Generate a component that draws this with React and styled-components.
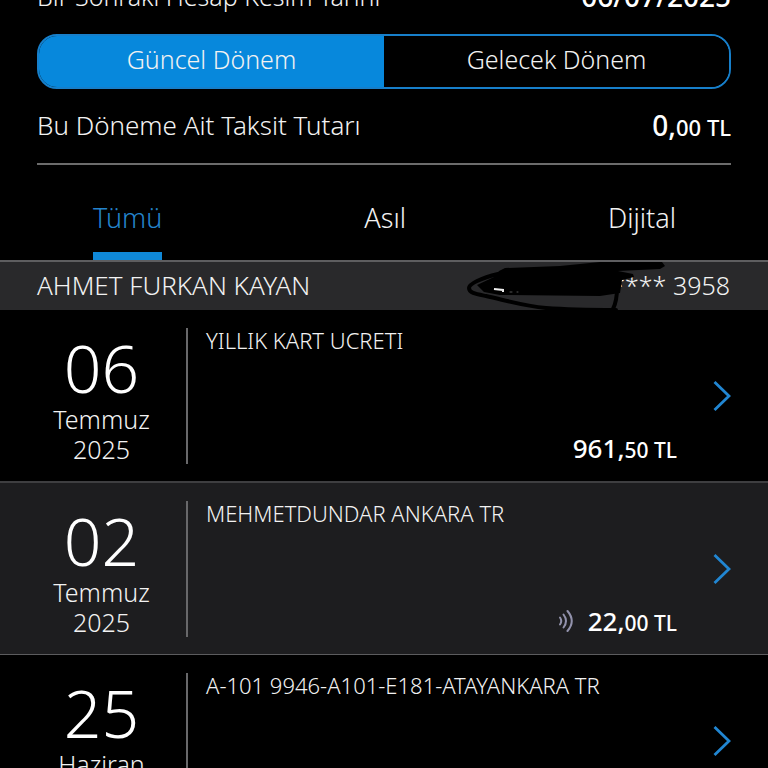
import React, { useState } from 'react';
import styled, { createGlobalStyle } from 'styled-components';

const GlobalStyle = createGlobalStyle`
  * {
    box-sizing: border-box;
  }

  body {
    margin: 0;
    background: #000;
    color: #f2f2f2;
    font-family: 'Noto Sans', 'Open Sans', sans-serif;
    font-weight: 300;
  }

  button {
    font: inherit;
    color: inherit;
    background: none;
    border: 0;
    padding: 0;
    cursor: pointer;
  }
`;

const Screen = styled.main`
  height: 100vh;
  overflow: hidden;
`;

const Summary = styled.section`
  padding: 0 37px;
`;

const SummaryRow = styled.div`
  display: flex;
  justify-content: space-between;
  align-items: flex-end;
  height: ${props => (props.$clipped ? 12 : 30)}px;
  font-size: ${props => (props.$clipped ? 25 : 26)}px;
  line-height: 32px;
`;

const Strong = styled.strong`
  font-size: ${props => (props.$large ? 28 : 26)}px;
  font-weight: 500;
  color: #fff;

  small {
    font-size: ${props => (props.$large ? 22 : 21)}px;
    line-height: 1;
  }
`;

const Segments = styled.div`
  display: flex;
  height: 55px;
  margin: 22px 0;
  border: 2px solid #177fca;
  border-radius: 20px;
  overflow: hidden;
`;

const Segment = styled.button`
  flex: 1;
  font-size: 25px;
  padding-bottom: 6px;
  background: ${props => (props.$active ? '#0788dc' : '#000')};
`;

const Divider = styled.hr`
  height: 2px;
  margin: 22px 0 0;
  border: 0;
  background: #6c6c6c;
`;

const Tabs = styled.div`
  display: flex;
  justify-content: space-between;
  padding: 0 92px 0 93px;
  height: 95px;
`;

const Tab = styled.button`
  display: flex;
  align-items: flex-end;
  font-size: 27px;
  line-height: 32px;
  padding-bottom: 18px;
  color: ${props => (props.$active ? '#2484cc' : '#f2f2f2')};
  border-bottom: 8px solid ${props => (props.$active ? '#0f88d8' : 'transparent')};
`;

const CardBar = styled.header`
  position: relative;
  display: flex;
  justify-content: space-between;
  align-items: center;
  height: 50px;
  padding: 0 38px 2px 37px;
  border-top: 2px solid #5e5e60;
  background: #29292b;
  font-size: 26px;
  line-height: 32px;
`;

const CardNumber = styled.span`
  font-size: 25px;
`;

const Scribble = styled.svg`
  position: absolute;
  right: 98px;
  top: -2px;
`;

const List = styled.ul`
  list-style: none;
  margin: 0;
  padding: 0;
`;

const Item = styled.li`
  background: ${props => (props.$shaded ? '#1d1d1f' : '#000')};

  &:not(:first-child) {
    border-top: ${props => (props.$shaded ? '2px solid #3e3e40' : '1px solid #5c5c5e')};
  }
`;

const ItemButton = styled.button`
  display: flex;
  align-items: center;
  width: 100%;
  height: 171px;
  padding: 18px 37px 17px 17px;
  text-align: left;
`;

const DateBox = styled.div`
  width: 171px;
  height: 136px;
  padding-top: 4px;
  border-right: 2px solid #68686a;
  text-align: center;
  font-size: 25px;
  line-height: 30px;
`;

const Day = styled.div`
  font-size: 66px;
  line-height: 70px;
  margin-bottom: 2px;
  color: #fff;
`;

const Details = styled.div`
  flex: 1;
  display: flex;
  flex-direction: column;
  justify-content: space-between;
  height: 136px;
  padding: 0 36px 2px 18px;
`;

const Title = styled.span`
  font-size: 22px;
  line-height: 24px;
`;

const Price = styled.div`
  display: flex;
  justify-content: flex-end;
  align-items: center;
  gap: 14px;
  line-height: 28px;
`;

const transactions = [
  { day: '06', month: 'Temmuz', year: '2025', title: 'YILLIK KART UCRETI', whole: '961', cents: '50' },
  { day: '02', month: 'Temmuz', year: '2025', title: 'MEHMETDUNDAR ANKARA TR', whole: '22', cents: '00', contactless: true },
  { day: '25', month: 'Haziran', year: '2025', title: 'A-101 9946-A101-E181-ATAYANKARA TR' },
];

const Money = ({ whole, cents, large }) => (
  <Strong $large={large}>
    {whole},<small>{cents} TL</small>
  </Strong>
);

const Chevron = () => (
  <svg width="18" height="30" viewBox="0 0 18 30" fill="none" stroke="#2186d2" strokeWidth="2.8" aria-hidden="true">
    <path d="M1.5 1 16 15 1.5 29" />
  </svg>
);

const Contactless = () => (
  <svg width="16" height="24" viewBox="0 0 16 24" fill="none" stroke="#9292ac" strokeWidth="2" strokeLinecap="round" aria-label="Temassız">
    <path d="M2 8.5Q4.5 12 2 15.5" />
    <path d="M5.5 5.5Q10.5 12 5.5 18.5" />
    <path d="M9.5 2Q18 12 9.5 22" />
  </svg>
);

const App = () => {
  const [period, setPeriod] = useState('Güncel Dönem');
  const [tab, setTab] = useState('Tümü');

  return (
    <>
      <GlobalStyle />
      <Screen>
        <Summary>
          <SummaryRow $clipped>
            <span>Bir Sonraki Hesap Kesim Tarihi</span>
            <Strong $large>06/07/2025</Strong>
          </SummaryRow>
          <Segments>
            {['Güncel Dönem', 'Gelecek Dönem'].map(name => (
              <Segment key={name} $active={name === period} onClick={() => setPeriod(name)}>
                {name}
              </Segment>
            ))}
          </Segments>
          <SummaryRow>
            <span>Bu Döneme Ait Taksit Tutarı</span>
            <Money whole="0" cents="00" large />
          </SummaryRow>
          <Divider />
        </Summary>

        <Tabs role="tablist">
          {['Tümü', 'Asıl', 'Dijital'].map(name => (
            <Tab key={name} role="tab" aria-selected={name === tab} $active={name === tab} onClick={() => setTab(name)}>
              {name}
            </Tab>
          ))}
        </Tabs>

        <CardBar>
          <span>AHMET FURKAN KAYAN</span>
          <CardNumber>**** 3958</CardNumber>
          <Scribble width="208" height="52" viewBox="462 260 208 52" fill="none" stroke="#000" strokeLinecap="round" aria-hidden="true">
            <path fill="#000" stroke="none" d="M499 271 505 268 560 266 600 262 662 262 665 266 660 269 618 271 633 274 634 277 622 280 620 293 600 296 500 295 484 292 477 285 494 277Z" />
            <path strokeWidth="4" d="M498 274C481 278 469 284 469 288 469 293 476 294 486 296 512 302 525 306 546 308 572 310 595 310 616 310" />
            <path strokeWidth="4" d="M617 288Q617 301 613 309" />
            <path stroke="#eee" strokeWidth="2" strokeLinecap="butt" d="M494 289 503 290V292" />
            <path stroke="#555" strokeWidth="1" d="M510 292H512M517 292H518" />
          </Scribble>
        </CardBar>

        <List>
          {transactions.map((item, index) => (
            <Item key={item.title} $shaded={index % 2 === 1}>
              <ItemButton>
                <DateBox>
                  <Day>{item.day}</Day>
                  <div>{item.month}</div>
                  <div>{item.year}</div>
                </DateBox>
                <Details>
                  <Title>{item.title}</Title>
                  {item.whole && (
                    <Price>
                      {item.contactless && <Contactless />}
                      <Money whole={item.whole} cents={item.cents} />
                    </Price>
                  )}
                </Details>
                <Chevron />
              </ItemButton>
            </Item>
          ))}
        </List>
      </Screen>
    </>
  );
};

export default App;
